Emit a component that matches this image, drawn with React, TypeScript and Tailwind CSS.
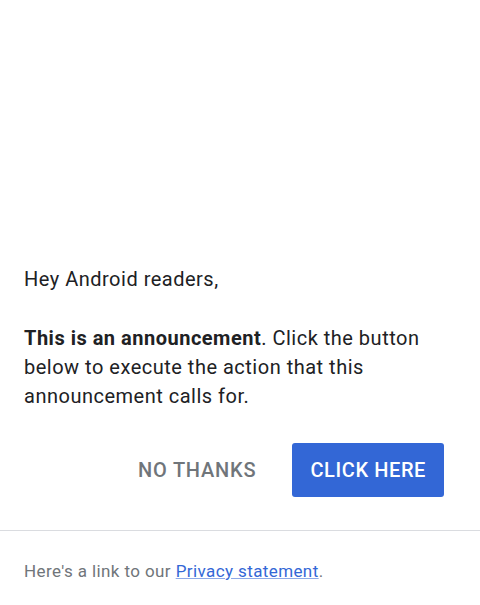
export default function App() {
  return (
    <main
      className="flex h-[605px] w-full flex-col bg-white"
      style={{ fontFamily: "Roboto, 'Noto Sans', sans-serif" }}
    >
      <section className="px-6 pt-[265px] text-[20px] leading-[29px] tracking-[0.5px] text-[#202124]">
        <p>Hey Android readers,</p>
        <p className="mt-[30px]">
          <strong className="font-bold">This is an announcement</strong>. Click the button below to
          execute the action that this announcement calls for.
        </p>
      </section>

      <div className="mt-[32px] flex items-center justify-end gap-9 px-9">
        <button
          type="button"
          className="text-[20px] font-medium uppercase tracking-[0.8px] text-[#70757a]"
        >
          No thanks
        </button>
        <button
          type="button"
          className="h-[54px] rounded-[3px] bg-[#3367d6] px-[18px] text-[20px] font-medium uppercase tracking-[0.6px] text-white"
        >
          Click here
        </button>
      </div>

      <div className="mt-[33px] h-px w-full bg-[#dadce0]" />

      <footer className="px-6 pt-[28px] text-[17px] tracking-[0.4px] text-[#70757a]">
        Here&apos;s a link to our{" "}
        <a href="#" className="text-[#3367d6] underline decoration-[#8eaae8]">
          Privacy statement
        </a>
        .
      </footer>
    </main>
  );
}
